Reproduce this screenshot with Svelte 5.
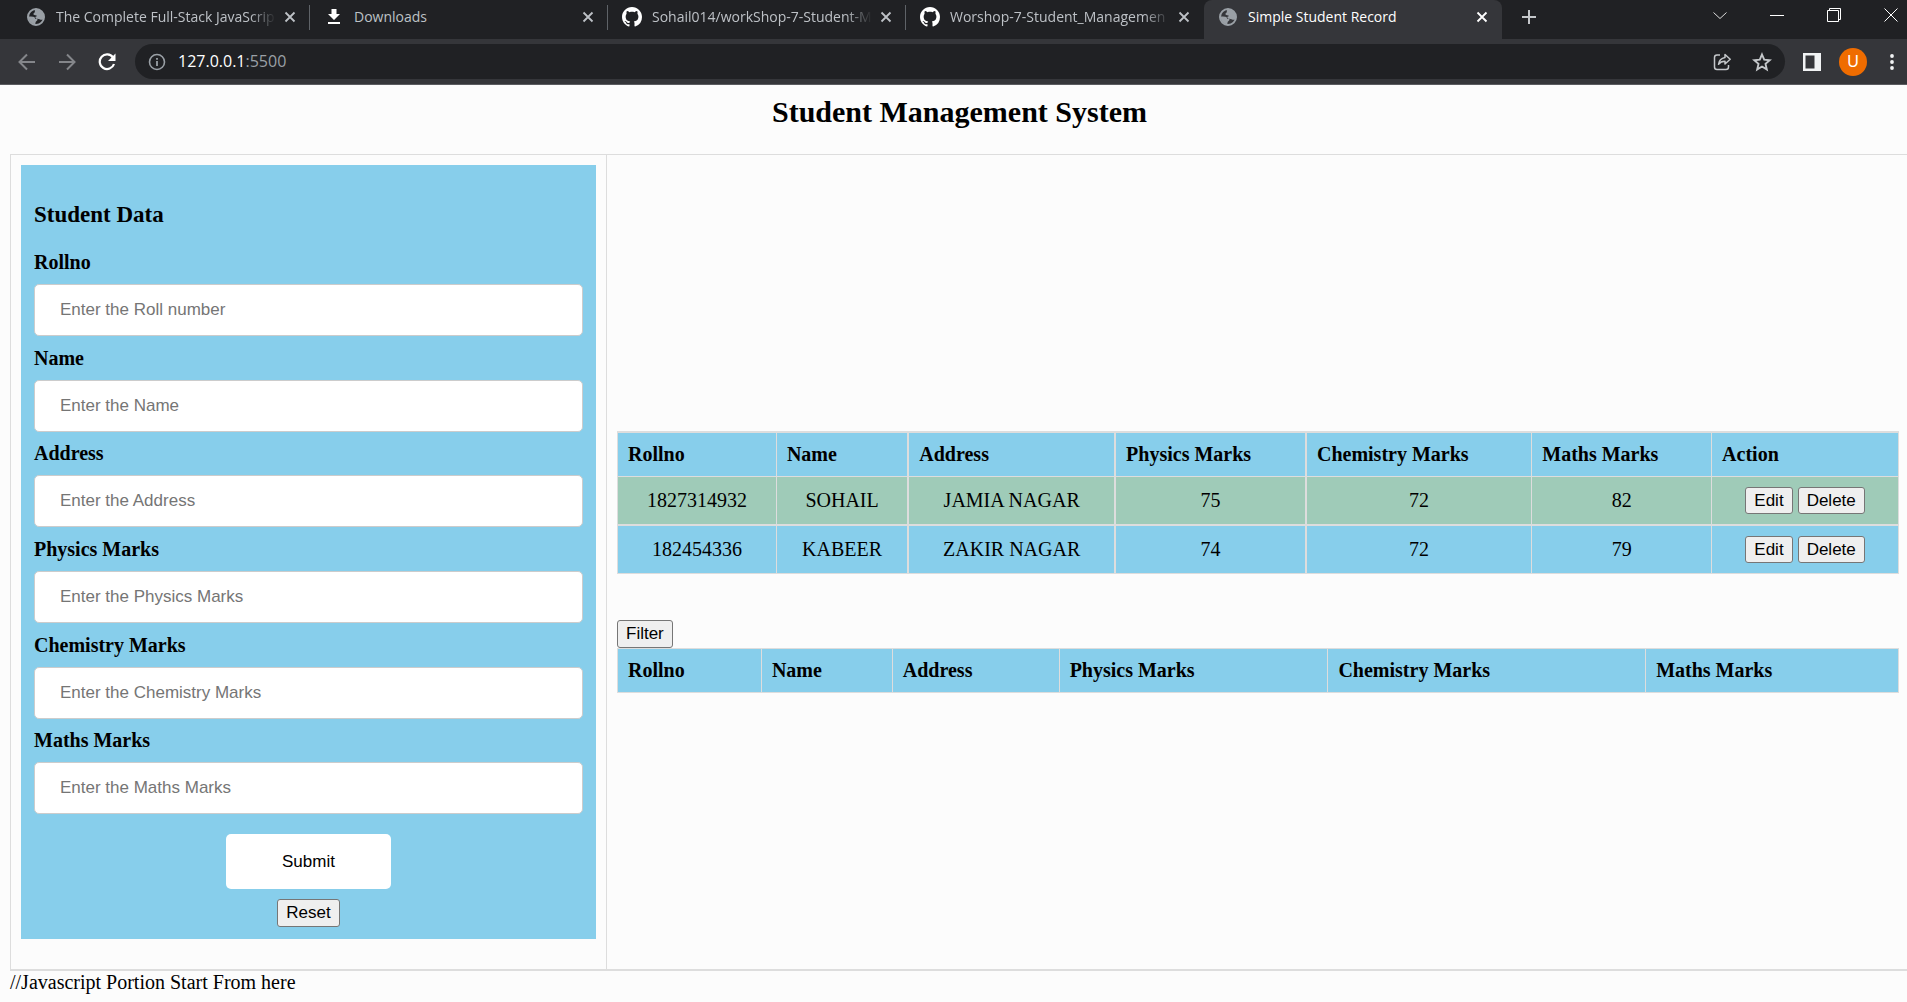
<script>
  const tabs = [
    { title: 'The Complete Full-Stack JavaScrip', icon: 'globe', fade: true },
    { title: 'Downloads', icon: 'download' },
    { title: 'Sohail014/workShop-7-Student-M', icon: 'github', fade: true },
    { title: 'Worshop-7-Student_Managemen', icon: 'github', fade: true },
    { title: 'Simple Student Record', icon: 'globe', active: true }
  ];

  const fields = [
    { id: 'rollno', label: 'Rollno', hint: 'Enter the Roll number' },
    { id: 'name', label: 'Name', hint: 'Enter the Name' },
    { id: 'address', label: 'Address', hint: 'Enter the Address' },
    { id: 'physics', label: 'Physics Marks', hint: 'Enter the Physics Marks' },
    { id: 'chemistry', label: 'Chemistry Marks', hint: 'Enter the Chemistry Marks' },
    { id: 'maths', label: 'Maths Marks', hint: 'Enter the Maths Marks' }
  ];

  // Column weights; rendered as shares of the table's width.
  const recordCols = [
    ['Rollno', 159], ['Name', 132], ['Address', 207], ['Physics Marks', 191],
    ['Chemistry Marks', 226], ['Maths Marks', 180], ['Action', 187]
  ];
  const filterCols = [
    ['Rollno', 144], ['Name', 131], ['Address', 167], ['Physics Marks', 269],
    ['Chemistry Marks', 318], ['Maths Marks', 253]
  ];
  const share = (cols, w) => (w / cols.reduce((sum, c) => sum + c[1], 0)) * 100;

  const students = [
    ['1827314932', 'SOHAIL', 'JAMIA NAGAR', '75', '72', '82'],
    ['182454336', 'KABEER', 'ZAKIR NAGAR', '74', '72', '79']
  ];
</script>

{#snippet globe()}
  <svg viewBox="0 0 18 18" width="18" height="18" aria-hidden="true">
    <circle cx="9" cy="9" r="8" fill="none" stroke="#9aa0a6" stroke-width="2" />
    <path fill="#9aa0a6" d="M1.500 8.500c1.500.1 3.200.1 4.700.2 1.600.2 2 1.200 1.800 2h1.700c.8.100 1 .8.600 1.500-.5.900-1.600 1-1.700 2-.1.800-.2 1.600-.6 2.300A7.600 7.600 0 0 1 1.500 8.500z M9 1.500c2.800-.3 5.300 1.300 6.600 3.500a8 8 0 0 1 .6 6.600c-1.300.4-2.500.2-3.700-.3-1.500-.6-3.200-.4-4-1.600-.7-1.200 1.500-1.100 1.300-2-.2-.6-2.600-.2-3.300-1.300-.6-1.100 1-1.500 1.300-2.500.2-.9-.3-1.900 1.200-2.400z" />
  </svg>
{/snippet}

{#snippet cross()}
  <svg viewBox="0 0 12 12" width="12" height="12" aria-hidden="true">
    <path d="M1.500 1.500l9 9M10.500 1.500l-9 9" fill="none" stroke="currentColor" stroke-width="1.800" />
  </svg>
{/snippet}

<header class="browser">
  <div class="strip">
    <div class="tabs">
      {#each tabs as tab}
        <div class="tab" class:active={tab.active}>
          <span class="icon">
            {#if tab.icon === 'globe'}
              {@render globe()}
            {:else if tab.icon === 'download'}
              <svg viewBox="0 0 14 17" width="14" height="17" aria-hidden="true">
                <path d="M4.500 1h5v5H13l-6 6-6-6h3.500zM1 14h12v2H1z" fill="#fff" />
              </svg>
            {:else}
              <svg viewBox="0 0 16 16" width="20" height="20" aria-hidden="true">
                <path fill="#fff" d="M8 0C3.580 0 0 3.580 0 8c0 3.540 2.290 6.530 5.470 7.590.4.070.55-.17.55-.38 0-.19-.01-.82-.01-1.490-2.010.37-2.530-.49-2.690-.94-.09-.23-.48-.94-.82-1.130-.28-.15-.68-.52-.01-.53.63-.01 1.080.58 1.230.82.72 1.210 1.870.87 2.330.66.07-.52.28-.87.51-1.070-1.780-.2-3.640-.89-3.640-3.950 0-.87.31-1.590.82-2.150-.08-.2-.36-1.020.08-2.120 0 0 .67-.21 2.200.82.64-.18 1.320-.27 2-.27s1.360.09 2 .27c1.530-1.040 2.200-.82 2.200-.82.44 1.100.16 1.920.08 2.120.51.56.82 1.270.82 2.150 0 3.070-1.870 3.750-3.650 3.950.29.25.54.73.54 1.480 0 1.070-.01 1.930-.01 2.200 0 .21.15.46.55.38A8.010 8.010 0 0 0 16 8c0-4.420-3.580-8-8-8z" />
              </svg>
            {/if}
          </span>
          <span class="title" class:fade={tab.fade}>{tab.title}</span>
          <button class="bare" aria-label="Close tab">{@render cross()}</button>
        </div>
      {/each}
      <button class="bare plus" aria-label="New tab">
        <svg viewBox="0 0 16 16" width="16" height="16"><path d="M8 1v14M1 8h14" stroke="#c4c7ca" stroke-width="2" /></svg>
      </button>
    </div>
    <div class="window">
      <button class="bare" aria-label="Search tabs">
        <svg viewBox="0 0 14 14" width="14" height="14"><path d="M.5 4.500L7 10.500l6.500-6" fill="none" stroke="#ddd" /></svg>
      </button>
      <button class="bare" aria-label="Minimize">
        <svg viewBox="0 0 14 14" width="14" height="14"><path d="M0 7.500h14" stroke="#fff" /></svg>
      </button>
      <button class="bare" aria-label="Restore">
        <svg viewBox="0 0 14 14" width="14" height="14"><path d="M.5 2.500h11v11H.5zM2.500 2.500v-2h11v11h-2" fill="none" stroke="#fff" /></svg>
      </button>
      <button class="bare" aria-label="Close window">
        <svg viewBox="0 0 14 14" width="14" height="14"><path d="M.5.5l13 13M13.500.5l-13 13" fill="none" stroke="#fff" /></svg>
      </button>
    </div>
  </div>

  <div class="toolbar">
    <button class="bare" aria-label="Back">
      <svg viewBox="0 0 18 18" width="18" height="18"><path d="M17 9H2M9 1.500L1.500 9 9 16.500" fill="none" stroke="#84868a" stroke-width="2" /></svg>
    </button>
    <button class="bare" aria-label="Forward">
      <svg viewBox="0 0 18 18" width="18" height="18"><path d="M1 9h15M9 1.500L16.500 9 9 16.500" fill="none" stroke="#84868a" stroke-width="2" /></svg>
    </button>
    <button class="bare" aria-label="Reload">
      <svg viewBox="0 0 18 18" width="18" height="18"><path d="M15 4.500A7.300 7.300 0 1 0 16 11" fill="none" stroke="#fff" stroke-width="2.200" /><path d="M17.500.5v7.500H10z" fill="#fff" /></svg>
    </button>
    <div class="omnibox">
      <svg viewBox="0 0 18 18" width="18" height="18" aria-hidden="true">
        <circle cx="9" cy="9" r="7.500" fill="none" stroke="#9aa0a6" stroke-width="1.600" />
        <path d="M9 8v5M9 5v1.800" stroke="#9aa0a6" stroke-width="1.800" />
      </svg>
      <span class="url">127.0.0.1<span class="port">:5500</span></span>
      <button class="bare" aria-label="Share">
        <svg viewBox="0 0 18 18" width="18" height="18">
          <path d="M7 2H4C2.500 2 1.500 3 1.500 4.500V14c0 1.500 1 2.500 2.500 2.500h9c1.500 0 2.500-1 2.500-2.500v-2" fill="none" stroke="#c4c7ca" stroke-width="1.500" />
          <path d="M12 1.500l5.200 4.800L12 11V8.300c-3 0-5 .9-6.500 3C6 7.300 8.500 5 12 4.400z" fill="none" stroke="#c4c7ca" stroke-width="1.500" stroke-linejoin="round" />
        </svg>
      </button>
      <button class="bare" aria-label="Bookmark">
        <svg viewBox="0 0 20 20" width="20" height="20"><path d="M10 2.500l2.200 5.200 5.600.5-4.300 3.700 1.300 5.500-4.800-2.900-4.800 2.900 1.300-5.500L2.200 8.200l5.600-.5z" fill="none" stroke="#c4c7ca" stroke-width="1.900" /></svg>
      </button>
    </div>
    <button class="bare" aria-label="Side panel">
      <svg viewBox="0 0 18 18" width="18" height="18"><path d="M0 0h18v18H0zM2.500 2.500v13h9v-13z" fill="#f1f3f4" fill-rule="evenodd" /></svg>
    </button>
    <button class="avatar" aria-label="Profile">U</button>
    <button class="bare" aria-label="Menu">
      <svg viewBox="0 0 6 18" width="6" height="18"><circle cx="3" cy="3" r="1.900" fill="#f1f3f4" /><circle cx="3" cy="9" r="1.900" fill="#f1f3f4" /><circle cx="3" cy="15" r="1.900" fill="#f1f3f4" /></svg>
    </button>
  </div>
</header>

<main>
  <h1>Student Management System</h1>

  <div class="layout">
    <section class="side">
      <form onsubmit={(e) => e.preventDefault()}>
        <h2>Student Data</h2>
        <div class="fields">
          {#each fields as f}
            <div class="field">
              <label for={f.id}>{f.label}</label>
              <input id={f.id} type="text" placeholder={f.hint} />
            </div>
          {/each}
        </div>
        <div class="actions">
          <button class="submit" type="submit">Submit</button>
          <button class="plain" type="reset">Reset</button>
        </div>
      </form>
    </section>

    <section class="records">
      <table class="list">
        <colgroup>
          {#each recordCols as [, w]}<col style:width="{share(recordCols, w)}%" />{/each}
        </colgroup>
        <thead>
          <tr>{#each recordCols as [name]}<th scope="col">{name}</th>{/each}</tr>
        </thead>
        <tbody>
          {#each students as row}
            <tr>
              {#each row as cell}<td>{cell}</td>{/each}
              <td>
                <div class="pair">
                  <button class="plain">Edit</button>
                  <button class="plain">Delete</button>
                </div>
              </td>
            </tr>
          {/each}
        </tbody>
      </table>

      <button class="plain filter">Filter</button>
      <table>
        <colgroup>
          {#each filterCols as [, w]}<col style:width="{share(filterCols, w)}%" />{/each}
        </colgroup>
        <thead>
          <tr>{#each filterCols as [name]}<th scope="col">{name}</th>{/each}</tr>
        </thead>
      </table>
    </section>
  </div>

  <p>//Javascript Portion Start From here</p>
</main>

<style>
  :global(body) {
    margin: 0;
    background: #fcfcfc;
    color: #000;
    font-family: 'Liberation Serif', 'Times New Roman', serif;
    font-size: 20px;
    line-height: 23px;
    overflow-x: hidden;
  }

  button,
  input {
    font-family: 'Liberation Sans', Arial, sans-serif;
    font-size: 17px;
    box-sizing: border-box;
  }

  svg {
    display: block;
  }

  .bare {
    display: flex;
    padding: 0;
    border: 0;
    background: none;
    color: inherit;
  }

  .browser {
    font-family: 'Open Sans', 'Segoe UI', sans-serif;
    background: #35363a;
    border-bottom: 1px solid #5b5c60;
  }

  .strip {
    display: flex;
    justify-content: space-between;
    height: 39px;
    background: #202124;
  }

  .tabs {
    display: flex;
    flex: 1;
    min-width: 0;
    padding-left: 12px;
  }

  .tab {
    position: relative;
    display: flex;
    align-items: center;
    flex: 0 1 298px;
    min-width: 0;
    box-sizing: border-box;
    padding: 0 14px 6px;
    color: #bdc1c6;
    font-size: 14px;
  }

  .tab:not(.active)::after {
    content: '';
    position: absolute;
    right: 0;
    top: 5px;
    width: 1px;
    height: 25px;
    background: #5f6368;
  }

  .tab:nth-child(4)::after {
    display: none;
  }

  .active {
    background: #35363a;
    color: #fff;
    border-radius: 8px 8px 0 0;
  }

  .icon {
    display: flex;
    justify-content: center;
    flex: 0 0 20px;
  }

  .title {
    flex: 1;
    min-width: 0;
    margin: 0 8px 0 10px;
    overflow: hidden;
    white-space: nowrap;
  }

  .fade {
    mask-image: linear-gradient(to left, transparent, #000 26px);
  }

  .plus {
    align-self: center;
    margin: 0 0 5px 19px;
  }

  .window {
    display: flex;
    align-items: center;
    gap: 43px;
    padding: 0 9px 10px 0;
  }

  .toolbar {
    display: flex;
    align-items: center;
    gap: 22px;
    padding: 5px 12px 5px 18px;
  }

  .omnibox {
    display: flex;
    align-items: center;
    flex: 1;
    gap: 21px;
    height: 35px;
    margin: 0 -4px 0 -3px;
    padding: 0 13px;
    border-radius: 18px;
    background: #202124;
    color: #c4c7ca;
  }

  .url {
    flex: 1;
    margin-left: -9px;
    color: #fff;
    font-size: 16px;
  }

  .port {
    color: #9aa0a6;
  }

  .avatar {
    width: 28px;
    height: 28px;
    margin-left: -4px;
    padding: 0;
    border: 0;
    border-radius: 50%;
    background: #ef6c00;
    color: #fff;
    font-size: 16px;
  }

  h1 {
    margin: 0;
    padding: 9px 0 25px 12px;
    font-size: 30px;
    line-height: 35px;
    text-align: center;
  }

  .layout {
    display: grid;
    grid-template-columns: 596px 1fr;
    margin-left: 10px;
    border: solid #ddd;
    border-width: 1px 0 2px 1px;
  }

  .side {
    padding: 10px 10px 30px;
    border-right: 1px solid #ddd;
  }

  form {
    padding: 12px 13px;
    background: skyblue;
  }

  h2 {
    margin: 0;
    padding: 24px 0 23px;
    font-size: 23px;
    line-height: 27px;
  }

  .fields {
    display: grid;
    grid-auto-rows: 1fr;
    min-height: 574px;
  }

  label {
    display: block;
    margin-bottom: 10px;
    font-weight: bold;
  }

  input {
    width: 100%;
    height: 52px;
    padding: 15px 25px;
    border: 1px solid #ccc;
    border-radius: 5px;
    background: #fff;
  }

  input::placeholder {
    color: #757575;
  }

  .actions {
    display: flex;
    flex-direction: column;
    align-items: center;
    gap: 10px;
    margin-top: 9px;
  }

  .submit {
    width: 30%;
    height: 55px;
    border: 0;
    border-radius: 5px;
    background: #fff;
    color: #000;
  }

  .plain {
    height: 28px;
    padding: 0 8px;
    border: 1px solid #767676;
    border-radius: 3px;
    background: #efefef;
    color: #000;
  }

  .records {
    display: flex;
    flex-direction: column;
    justify-content: center;
    align-items: flex-start;
    padding: 10px 8px 10px 10px;
  }

  table {
    width: 100%;
    table-layout: fixed;
    border-collapse: collapse;
    background: skyblue;
  }

  th,
  td {
    height: 23px;
    padding: 10px;
    border: 1px solid #ddd;
    text-align: left;
    white-space: nowrap;
  }

  td {
    height: 27px;
    text-align: center;
  }

  .list {
    border-top: 2px solid #ddd;
  }

  .list :is(th, td):is(:nth-child(2), :nth-child(3), :nth-child(4)) {
    border-right-width: 2px;
  }

  tbody tr:first-child {
    background: #9fcbb8;
  }

  tbody tr:first-child td {
    border-bottom-width: 2px;
  }

  .pair {
    display: flex;
    justify-content: center;
    gap: 5px;
  }

  .pair .plain {
    height: 27px;
  }

  .filter {
    margin-top: 46px;
  }

  p {
    margin: 0;
    padding-left: 10px;
  }
</style>
